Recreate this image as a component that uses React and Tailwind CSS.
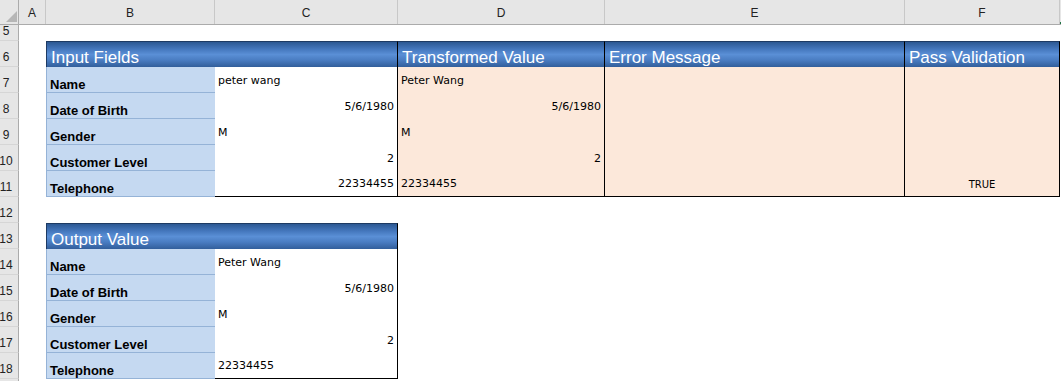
import React from 'react';

const sans = "font-['Liberation_Sans',Arial,sans-serif]";
const data = "font-['DejaVu_Sans',Verdana,sans-serif] text-[11px]";

const headerBg =
  'bg-[linear-gradient(180deg,#2c5893_0%,#4679bf_30%,#5a8fd6_50%,#4a7dc2_72%,#325e9b_100%)]';

const inputRows = [
  { label: 'Name', raw: 'peter wang', value: 'Peter Wang', align: 'left' },
  { label: 'Date of Birth', raw: '5/6/1980', value: '5/6/1980', align: 'right' },
  { label: 'Gender', raw: 'M', value: 'M', align: 'left' },
  { label: 'Customer Level', raw: '2', value: '2', align: 'right' },
  { label: 'Telephone', raw: '22334455', value: '22334455', align: 'right', outLeft: true },
];

const outputRows = [
  { label: 'Name', value: 'Peter Wang', align: 'left' },
  { label: 'Date of Birth', value: '5/6/1980', align: 'right' },
  { label: 'Gender', value: 'M', align: 'left' },
  { label: 'Customer Level', value: '2', align: 'right' },
  { label: 'Telephone', value: '22334455', align: 'left' },
];

const RowNum = ({ n }) => (
  <div className="w-[25px] shrink-0 flex items-end justify-center pb-[2px] bg-[#e6e6e6] border-r border-b border-r-[#ababab] border-b-[#d6d6d6] text-[12px] leading-[14px] text-[#222]">
    {n}
  </div>
);

const ColHead = ({ w, children }) => (
  <div className={`${w} shrink-0 flex items-end justify-center pb-[4px] border-r border-[#c8c8c8] text-[12px] leading-[14px] text-[#222]`}>
    {children}
  </div>
);

const Label = ({ children }) => (
  <div className="w-[169px] shrink-0 flex items-end pl-[3px] bg-[#c5d9f1] border-l border-b border-[#95b3d7] font-bold text-[13px] leading-[15px] text-black">
    {children}
  </div>
);

const Value = ({ w, align, bg, last, children }) => (
  <div
    className={`${w} shrink-0 flex items-center pt-[2px] px-[3px] border-r border-black ${bg} ${last ? 'border-b' : ''} ${align === 'right' ? 'justify-end' : align === 'center' ? 'justify-center' : 'justify-start'} ${data} text-black`}
  >
    {children}
  </div>
);

const HeadCell = ({ w, children, first }) => (
  <div
    className={`${w} shrink-0 flex items-end pl-[4px] ${headerBg} border-t border-r border-t-[#1d3a63] border-r-black ${first ? 'border-l border-l-[#1d3a63]' : ''} text-white text-[17px] leading-[19px]`}
  >
    {children}
  </div>
);

const Spacer = () => <div className="w-[27px] shrink-0" />;

export default function App() {
  return (
    <div className={`w-[1061px] h-[381px] overflow-hidden bg-white ${sans}`}>
      <div className="ml-[-6px]">
        {/* column letters */}
        <div className="flex h-[25px] bg-[#e6e6e6] border-b border-[#ababab]">
          <div className="w-[25px] shrink-0 flex items-end justify-end pr-[1px] pb-[2px] border-r border-[#ababab]">
            <div className="w-[11px] h-[11px] bg-[#b6b6b6] [clip-path:polygon(100%_0,100%_100%,0_100%)]" />
          </div>
          <ColHead w="w-[27px]">A</ColHead>
          <ColHead w="w-[169px]">B</ColHead>
          <ColHead w="w-[183px]">C</ColHead>
          <ColHead w="w-[207px]">D</ColHead>
          <ColHead w="w-[300px]">E</ColHead>
          <ColHead w="w-[155px]">F</ColHead>
          <div className="w-[1px] flex items-end">
            <div className="w-[2px] h-[2px] bg-[#217346]" />
          </div>
        </div>

        {/* row 5 */}
        <div className="flex h-[16px]">
          <RowNum n={5} />
        </div>

        {/* input table */}
        <div className="flex h-[26px]">
          <RowNum n={6} />
          <Spacer />
          <HeadCell w="w-[352px]" first>Input Fields</HeadCell>
          <HeadCell w="w-[207px]">Transformed Value</HeadCell>
          <HeadCell w="w-[300px]">Error Message</HeadCell>
          <HeadCell w="w-[155px]">Pass Validation</HeadCell>
        </div>
        {inputRows.map((r, i) => {
          const last = i === inputRows.length - 1;
          return (
            <div key={r.label} className="flex h-[26px]">
              <RowNum n={7 + i} />
              <Spacer />
              <Label>{r.label}</Label>
              <Value w="w-[183px]" align={r.align} bg="bg-white" last={last}>{r.raw}</Value>
              <Value w="w-[207px]" align={r.outLeft ? 'left' : r.align} bg="bg-[#fce8da]" last={last}>{r.value}</Value>
              <Value w="w-[300px]" bg="bg-[#fce8da]" last={last} />
              <Value w="w-[155px]" align="center" bg="bg-[#fce8da]" last={last}>
                {last ? <span className="text-[10px]">TRUE</span> : null}
              </Value>
            </div>
          );
        })}

        {/* row 12 */}
        <div className="flex h-[26px]">
          <RowNum n={12} />
        </div>

        {/* output table */}
        <div className="flex h-[26px]">
          <RowNum n={13} />
          <Spacer />
          <HeadCell w="w-[352px]" first>Output Value</HeadCell>
        </div>
        {outputRows.map((r, i) => (
          <div key={r.label} className="flex h-[26px]">
            <RowNum n={14 + i} />
            <Spacer />
            <Label>{r.label}</Label>
            <Value w="w-[183px]" align={r.align} bg="bg-white" last={i === outputRows.length - 1}>
              {r.value}
            </Value>
          </div>
        ))}

        {/* next row, only its header edge is in view */}
        <div className="flex h-[26px]">
          <RowNum n="" />
        </div>
      </div>
    </div>
  );
}
